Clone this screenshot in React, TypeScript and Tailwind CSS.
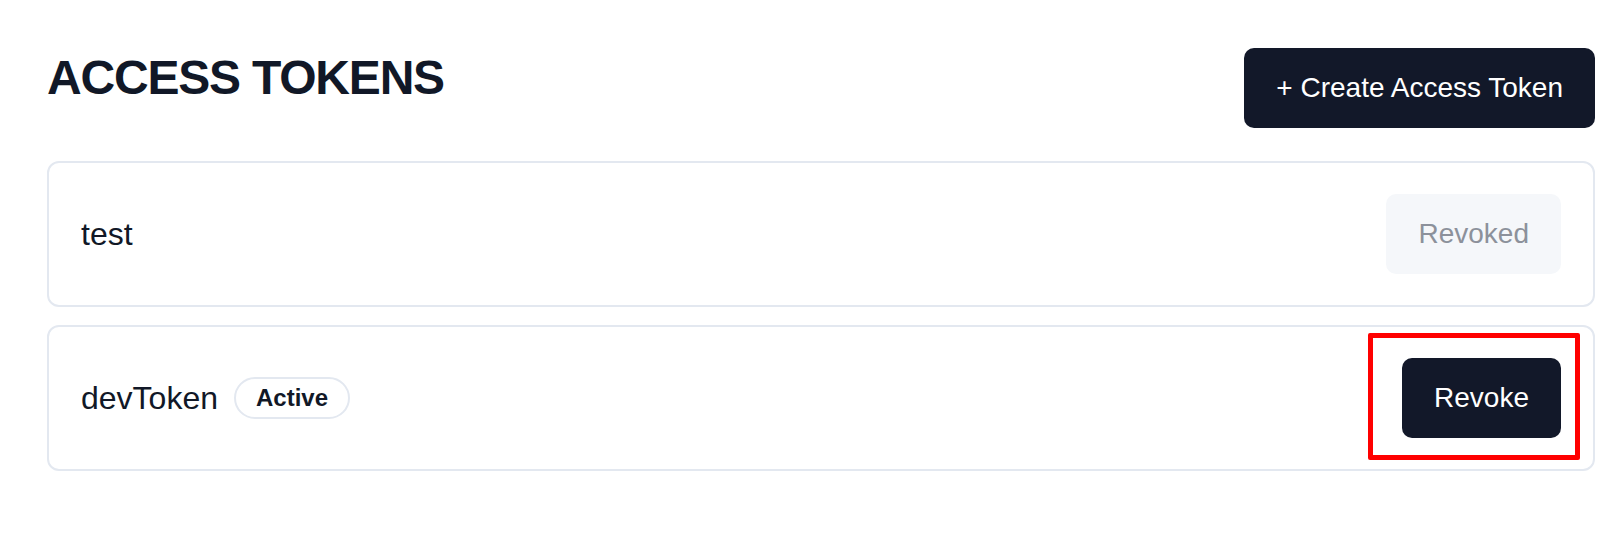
type Token = {
  name: string;
  active: boolean;
};

const tokens: Token[] = [
  { name: "test", active: false },
  { name: "devToken", active: true },
];

const TokenRow = ({ token }: { token: Token }) => {
  return (
    <div className="flex items-center justify-between rounded-xl border-2 border-[#e3e8f0] bg-white px-8 py-[31px]">
      <div className="flex items-center gap-4">
        <span className="text-[32px] leading-none text-[#111827]">{token.name}</span>
        {token.active && (
          <span className="flex h-[42px] items-center rounded-full border-2 border-[#e3e8f0] px-5 text-2xl font-bold text-[#111827]">
            Active
          </span>
        )}
      </div>

      {token.active ? (
        <div className="relative">
          <button className="flex h-[80px] items-center rounded-[10px] bg-[#121829] px-8 text-[28px] text-white">
            Revoke
          </button>
          {/* annotation box */}
          <div className="pointer-events-none absolute -top-[25px] -left-[34px] h-[127px] w-[212px] rounded-[2px] border-[5px] border-[#ff0000]"></div>
        </div>
      ) : (
        <button
          disabled
          className="flex h-[80px] items-center rounded-[10px] bg-[#f5f7fa] px-8 text-[28px] text-[#8c919b]"
        >
          Revoked
        </button>
      )}
    </div>
  );
};

export default function App() {
  return (
    <div
      className="min-h-[534px] bg-white pl-[47px] pr-[19px] pt-12"
      style={{ fontFamily: '"Liberation Sans", Arial, Helvetica, sans-serif' }}
    >
      {/* header */}
      <div className="mb-[33px] flex items-start justify-between">
        <h1 className="mt-[6px] text-5xl font-bold tracking-tight text-[#111827]">
          ACCESS TOKENS
        </h1>
        <button className="flex h-[80px] items-center rounded-[10px] bg-[#121829] px-8 text-[28px] text-white">
          + Create Access Token
        </button>
      </div>

      {/* token list */}
      <div className="flex flex-col gap-[18px]">
        {tokens.map((t) => (
          <TokenRow key={t.name} token={t} />
        ))}
      </div>
    </div>
  );
}
